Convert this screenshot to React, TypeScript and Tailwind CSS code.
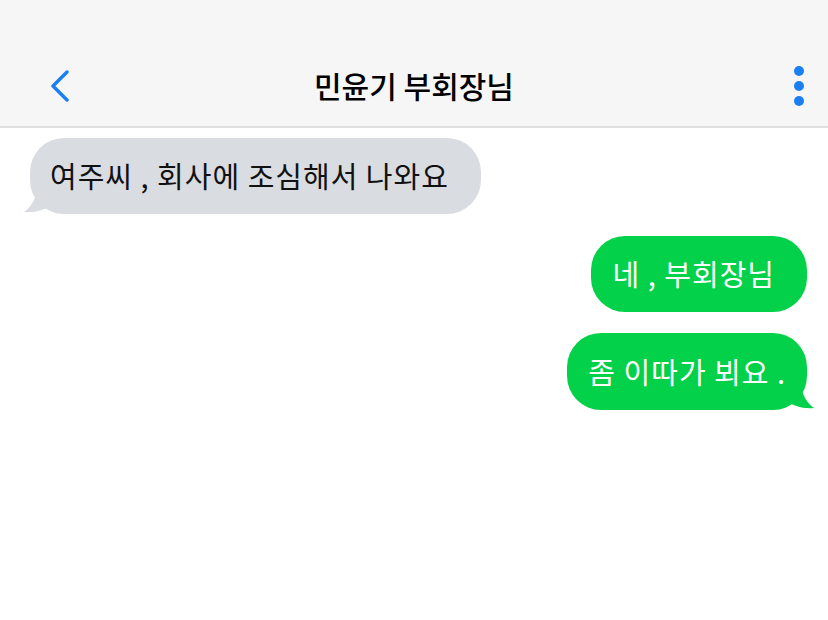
const font = { fontFamily: '"Noto Sans CJK KR", "Noto Sans", sans-serif' };

function LeftTail() {
  return (
    <svg
      className="absolute -left-[7px] bottom-0"
      width="44"
      height="34"
      viewBox="0 0 44 34"
    >
      <path
        d="M14 0 C14 14 12 24 1 32 C12 33 22 30 30 24 C34 28 40 31 44 32 L44 0 Z"
        fill="#d9dce1"
      />
    </svg>
  );
}

function RightTail() {
  return (
    <svg
      className="absolute -right-[8px] bottom-0"
      width="44"
      height="34"
      viewBox="0 0 44 34"
    >
      <path
        d="M30 0 C30 14 32 24 43 32 C32 33 22 30 14 24 C10 28 4 31 0 32 L0 0 Z"
        fill="#04d14a"
      />
    </svg>
  );
}

export default function App() {
  return (
    <div className="w-[828px] h-[620px] bg-white overflow-hidden" style={font}>
      {/* header */}
      <div className="h-[128px] bg-[#f6f6f6] border-b-2 border-[#dfdfdf] pt-[45px] grid grid-cols-[1fr_auto_1fr] items-center">
        <div className="pl-[50px]">
          <svg width="20" height="32" viewBox="0 0 20 32">
            <polyline
              points="17,2 3,16 17,30"
              fill="none"
              stroke="#1a7ff2"
              strokeWidth="3.4"
              strokeLinecap="round"
              strokeLinejoin="round"
            />
          </svg>
        </div>
        <div className="text-[30px] font-medium text-black">민윤기 부회장님</div>
        <div className="flex justify-end pr-[24px]">
          <div className="flex flex-col gap-[5px] items-center">
            <span className="w-[10px] h-[10px] rounded-full bg-[#1a7ff2]" />
            <span className="w-[10px] h-[10px] rounded-full bg-[#1a7ff2]" />
            <span className="w-[10px] h-[10px] rounded-full bg-[#1a7ff2]" />
          </div>
        </div>
      </div>

      {/* messages */}
      <div className="flex flex-col pt-[10px] px-[21px]">
        <div className="self-start ml-[9px] relative">
          <LeftTail />
          <div className="relative h-[76px] rounded-[34px] bg-[#d9dce1] pl-[20px] pr-[32px] flex items-center text-[29px] text-[#111] tracking-[1px]">
            여주씨 , 회사에 조심해서 나와요
          </div>
        </div>

        <div className="self-end mt-[22px] h-[76px] rounded-[34px] bg-[#04d14a] pl-[22px] pr-[32px] flex items-center text-[29px] text-white tracking-[1px]">
          네 , 부회장님
        </div>

        <div className="self-end mt-[21px] relative">
          <RightTail />
          <div className="relative h-[77px] rounded-[34px] bg-[#04d14a] pl-[21px] pr-[21px] flex items-center text-[29px] text-white tracking-[1px]">
            좀 이따가 뵈요 .
          </div>
        </div>
      </div>
    </div>
  );
}
